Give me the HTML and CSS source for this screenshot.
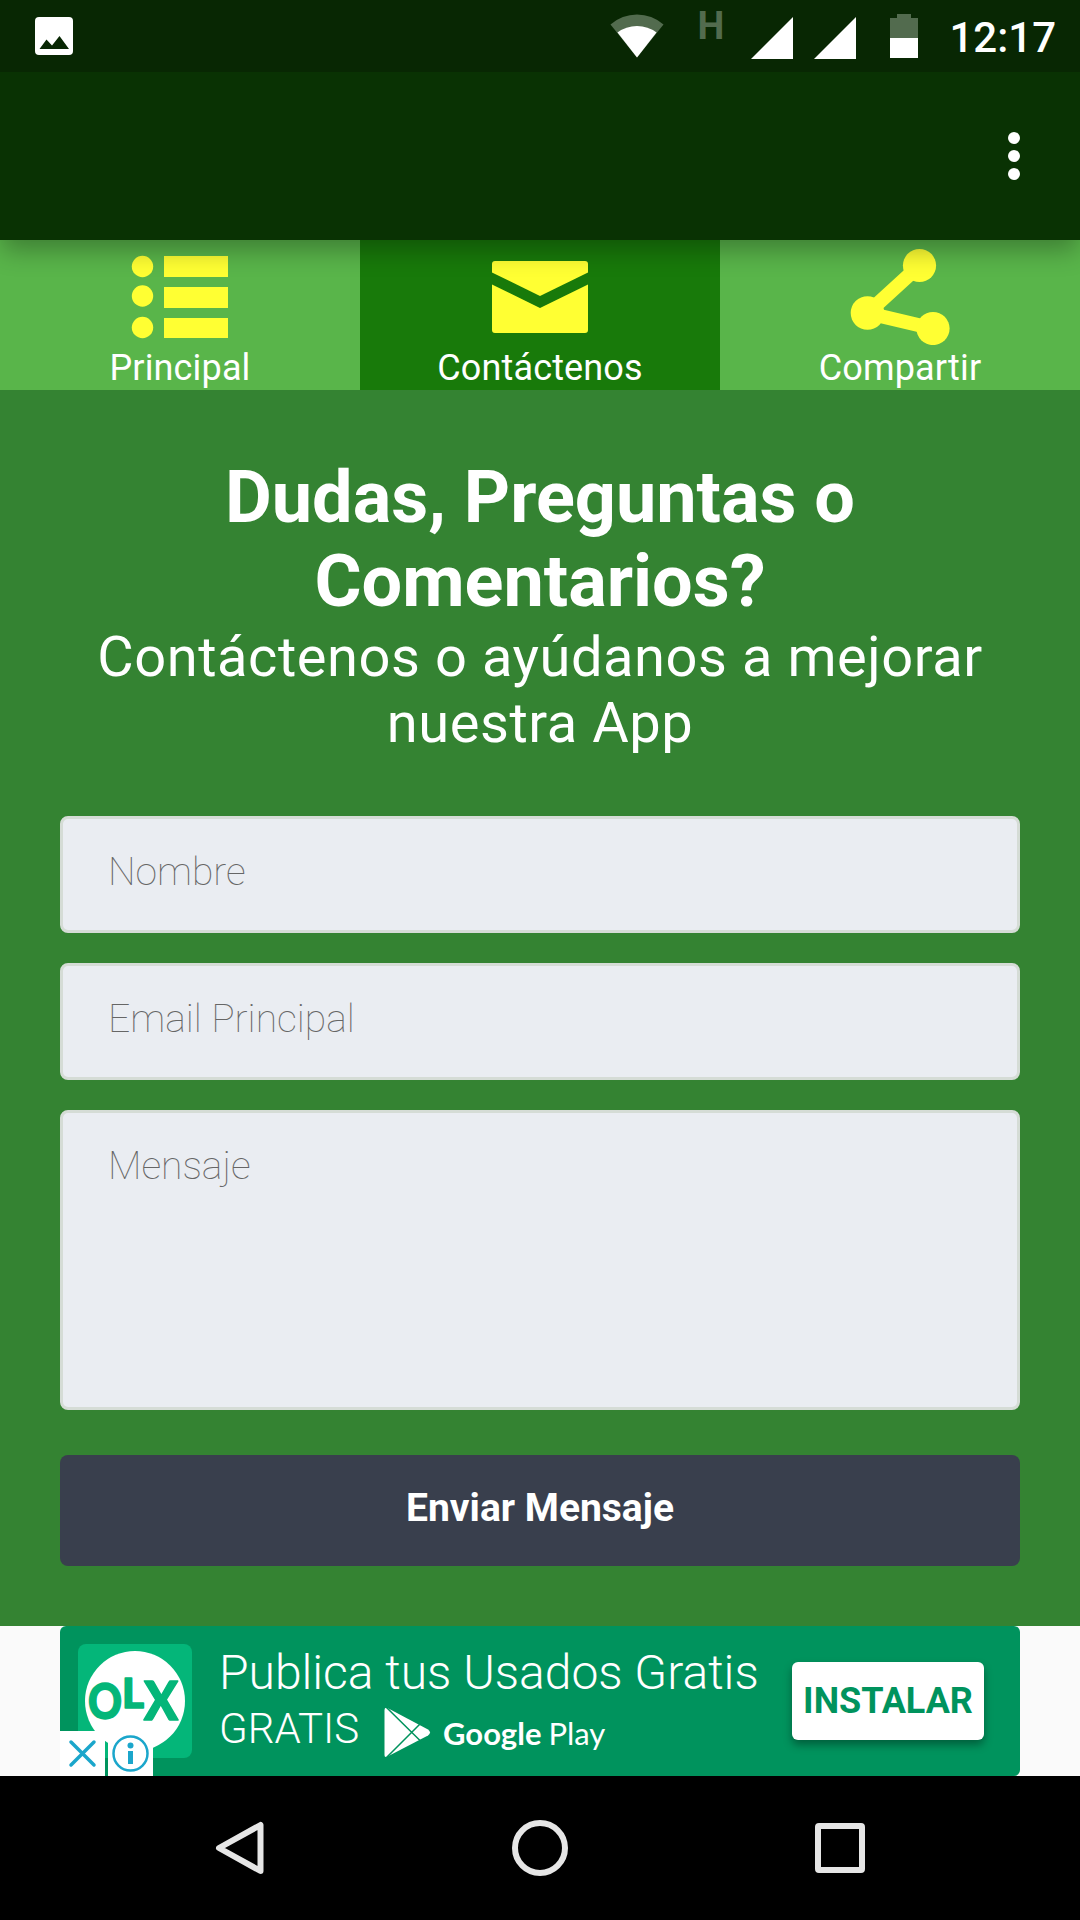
FILE: index.html
```html
<!DOCTYPE html>
<html lang="es">
<head>
    <meta charset="UTF-8">
    <meta name="viewport" content="width=device-width, initial-scale=1.0">
    <title>Contáctenos</title>
    <link rel="stylesheet" href="styles.css">
</head>
<body>
    <div class="status-bar">
        <svg class="photo-icon" width="38" height="38" viewBox="0 0 38 38">
            <rect width="38" height="38" rx="4" fill="#fff"/>
            <path d="M4.500 32l7-9.500 5.500 6 7.500-9.500 9.500 13z" fill="#082703"/>
        </svg>
        <div class="status-icons">
            <svg class="wifi" width="54" height="44" viewBox="0 0 54 44">
                <path d="M27 43.500L.5 10.500Q12 .5 27 .5t26.500 10z" fill="#526b4e"/>
                <path d="M27 43.500L7.500 18.500Q16 12 27 12t19.500 6.500z" fill="#fff"/>
            </svg>
            <span class="network">H</span>
            <svg class="signal" width="42" height="42" viewBox="0 0 42 42"><path d="M0 42L42 0v42z" fill="#fff"/></svg>
            <svg class="signal" width="42" height="42" viewBox="0 0 42 42"><path d="M0 42L42 0v42z" fill="#fff"/></svg>
            <svg class="battery" width="28" height="44" viewBox="0 0 28 44">
                <path d="M0 4h7V0h14v4h7v20H0z" fill="#526b4e"/>
                <path d="M0 24h28v20H0z" fill="#fff"/>
            </svg>
            <span class="clock">12:17</span>
        </div>
    </div>

    <div class="app-bar">
        <svg width="12" height="48" viewBox="0 0 12 48" fill="#fff">
            <circle cx="6" cy="6" r="6"/>
            <circle cx="6" cy="24" r="6"/>
            <circle cx="6" cy="42" r="6"/>
        </svg>
    </div>

    <div class="tabs">
        <a class="tab">
            <svg width="100" height="100" viewBox="0 0 100 100" fill="#ffff33">
                <circle cx="12.500" cy="21.500" r="10.700"/>
                <circle cx="12.500" cy="51" r="10.700"/>
                <circle cx="12.500" cy="82.500" r="10.700"/>
                <path d="M34 11h64v21H34zM34 42h64v21H34zM34 73h64v20H34z"/>
            </svg>
            <span>Principal</span>
        </a>
        <a class="tab active">
            <svg width="100" height="100" viewBox="0 0 100 100" fill="#ffff33">
                <path d="M2 27.500V19q0-3 3-3h90q3 0 3 3v8.500L50 51z"/>
                <path d="M2 39.500L50 63l48-23.500V85q0 3-3 3H5q-3 0-3-3z"/>
            </svg>
            <span>Contáctenos</span>
        </a>
        <a class="tab">
            <svg width="100" height="100" viewBox="0 0 100 100" fill="#ffff33">
                <path d="M69.500 20.500L17.500 68 83 83.500" fill="none" stroke="#ffff33" stroke-width="14"/>
                <circle cx="69.500" cy="20.500" r="16.600"/>
                <circle cx="17.500" cy="68" r="16.800"/>
                <circle cx="83" cy="83.500" r="16.600"/>
            </svg>
            <span>Compartir</span>
        </a>
    </div>

    <div class="content">
        <h1>Dudas, Preguntas o Comentarios?</h1>
        <h2>Contáctenos o ayúdanos a mejorar nuestra App</h2>
        <form class="contact-form">
            <input type="text" placeholder="Nombre">
            <input type="email" placeholder="Email Principal">
            <textarea placeholder="Mensaje"></textarea>
            <button type="button">Enviar Mensaje</button>
        </form>
    </div>

    <div class="ad-strip">
        <div class="ad">
            <svg class="ad-logo" width="114" height="114" viewBox="0 0 114 114">
                <rect width="114" height="114" rx="8" fill="#04b679"/>
                <circle cx="57" cy="57" r="50" fill="#fff"/>
                <g class="ad-name">
                    <text x="10" y="74.500" textLength="34" lengthAdjust="spacingAndGlyphs" font-size="50">O</text>
                    <text x="44" y="63.500" textLength="22" lengthAdjust="spacingAndGlyphs" font-size="41">L</text>
                    <text x="66" y="76" textLength="34" lengthAdjust="spacingAndGlyphs" font-size="53">X</text>
                </g>
            </svg>
            <div class="ad-text">
                <div class="ad-title">Publica tus Usados Gratis</div>
                <div class="ad-row">
                    <span class="ad-price">GRATIS</span>
                    <svg width="47" height="51" viewBox="0 0 47 51">
                        <path d="M.5 3Q.5 0 3.500 1L44 22.500q4 3 0 6L3.500 49.500Q.5 51 .5 48z" fill="#fff"/>
                        <path d="M2 0l34 33.500M2 51l34-34" stroke="#00935d" stroke-width="1.500" fill="none"/>
                    </svg>
                    <span class="google">Google</span>
                    <span class="play">Play</span>
                </div>
            </div>
            <a class="install">INSTALAR</a>
            <div class="ad-choices">
                <svg width="45" height="45" viewBox="0 0 45 45">
                    <path d="M11 11l23 23M34 11L11 34" stroke="#1ba6cb" stroke-width="3.500" stroke-linecap="round"/>
                </svg>
                <svg width="45" height="45" viewBox="0 0 45 45">
                    <circle cx="22.500" cy="22.500" r="17" fill="none" stroke="#1ba6cb" stroke-width="2.500"/>
                    <circle cx="22.500" cy="14.500" r="3" fill="#1ba6cb"/>
                    <path d="M20 20h5v13h-5z" fill="#1ba6cb"/>
                </svg>
            </div>
        </div>
    </div>

    <div class="nav-bar">
        <svg width="56" height="56" viewBox="0 0 56 56"><path d="M48.500 5v46L7 28z"/></svg>
        <svg width="56" height="56" viewBox="0 0 56 56"><circle cx="28" cy="28" r="25"/></svg>
        <svg width="56" height="56" viewBox="0 0 56 56"><rect x="6" y="6" width="44" height="44" rx="1"/></svg>
    </div>
</body>
</html>
```
FILE: styles.css
```css
* {
    box-sizing: border-box;
}

body {
    margin: 0;
    width: 1080px;
    height: 1920px;
    display: flex;
    flex-direction: column;
    overflow: hidden;
    font-family: Roboto, sans-serif;
    color: #fff;
    background-color: #fafafa;
}

svg {
    display: block;
    flex: none;
}

.status-bar {
    position: relative;
    z-index: 2;
    height: 72px;
    flex: none;
    display: flex;
    justify-content: space-between;
    align-items: flex-start;
    padding: 0 24px 0 35px;
    background-color: #082703;
}

.photo-icon {
    margin-top: 17px;
}

.status-icons {
    display: flex;
    align-items: flex-start;
}

.wifi {
    margin: 14px 33px 0 0;
}

.network {
    width: 27px;
    margin: 4px 27px 0 0;
    font-size: 38px;
    font-weight: bold;
    line-height: 45px;
    color: #526b4e;
}

.signal {
    margin: 17px 21px 0 0;
}

.battery {
    margin: 14px 31px 0 13px;
}

.clock {
    margin-top: 13px;
    font-size: 42px;
    font-weight: 500;
    line-height: 50px;
}

.app-bar {
    position: relative;
    z-index: 1;
    height: 168px;
    flex: none;
    display: flex;
    justify-content: flex-end;
    align-items: center;
    padding-right: 60px;
    background-color: #093203;
    box-shadow: 0 12px 24px -2px rgba(0, 0, 0, 0.3);
}

.tabs {
    display: grid;
    grid-template-columns: repeat(3, 1fr);
    height: 150px;
    flex: none;
}

.tab {
    display: flex;
    flex-direction: column;
    align-items: center;
    padding-top: 5px;
    background-color: #59b54a;
    font-size: 36px;
    line-height: 46px;
    letter-spacing: 0.15px;
}

.tab.active {
    background-color: #187a0a;
}

.content {
    height: 1236px;
    flex: none;
    padding: 66px 60px 0;
    text-align: center;
    background-color: #348332;
}

.content h1 {
    margin: 0;
    font-size: 72px;
    font-weight: bold;
    line-height: 84px;
}

.content h2 {
    margin: 0 0 60px;
    font-size: 56px;
    font-weight: normal;
    line-height: 66px;
    letter-spacing: 0.55px;
}

.contact-form {
    display: flex;
    flex-direction: column;
    gap: 30px;
}

.contact-form input,
.contact-form textarea {
    width: 100%;
    height: 117px;
    margin: 0;
    padding: 0 45px 5px;
    border: 3px solid #d5dcd6;
    border-radius: 8px;
    background-color: #eaedf2;
    font-family: inherit;
    font-size: 39px;
    font-weight: 100;
    resize: none;
}

.contact-form textarea {
    height: 300px;
    padding-top: 30px;
}

.contact-form ::placeholder {
    color: #666;
}

.contact-form button {
    height: 111px;
    margin-top: 15px;
    padding: 0 0 5px;
    border: none;
    border-radius: 8px;
    background-color: #393f4d;
    color: #fff;
    font-family: inherit;
    font-size: 39px;
    font-weight: bold;
}

.ad-strip {
    height: 150px;
    flex: none;
    padding: 0 60px;
}

.ad {
    position: relative;
    display: flex;
    align-items: flex-start;
    height: 150px;
    border-radius: 6px;
    background-color: #00935d;
}

.ad-logo {
    margin: 18px 0 0 18px;
}

.ad-name text {
    font-family: Lato, sans-serif;
    font-weight: 900;
    fill: #04b679;
    stroke: #04b679;
    stroke-width: 1.5px;
    stroke-linejoin: round;
}

.ad-text {
    width: 573px;
    margin: 19px 0 0 27px;
    white-space: nowrap;
}

.ad-title {
    font-size: 48px;
    font-weight: 300;
    line-height: 56px;
}

.ad-row {
    display: flex;
    align-items: center;
    height: 51px;
    margin-top: 6px;
}

.ad-price {
    width: 165px;
    margin-top: -9px;
    font-size: 42px;
    font-weight: 300;
}

.google,
.play {
    font-family: Lato, sans-serif;
    font-size: 31px;
    line-height: 38px;
}

.google {
    margin-left: 12px;
    font-weight: 700;
}

.play {
    margin-left: 7px;
}

.install {
    width: 192px;
    height: 78px;
    margin-top: 36px;
    border-radius: 6px;
    background-color: #fff;
    box-shadow: 0 5px 8px rgba(0, 0, 0, 0.35);
    color: #00935d;
    font-size: 36px;
    font-weight: bold;
    line-height: 78px;
    text-align: center;
}

.ad-choices {
    position: absolute;
    left: 0;
    bottom: 0;
    display: flex;
    gap: 3px;
}

.ad-choices svg {
    background-color: #fff;
}

.nav-bar {
    height: 144px;
    flex: none;
    display: flex;
    justify-content: space-between;
    align-items: center;
    padding: 0 212px;
    background-color: #000;
}

.nav-bar svg {
    fill: none;
    stroke: #e6e6e6;
    stroke-width: 6px;
    stroke-linejoin: round;
}
```
